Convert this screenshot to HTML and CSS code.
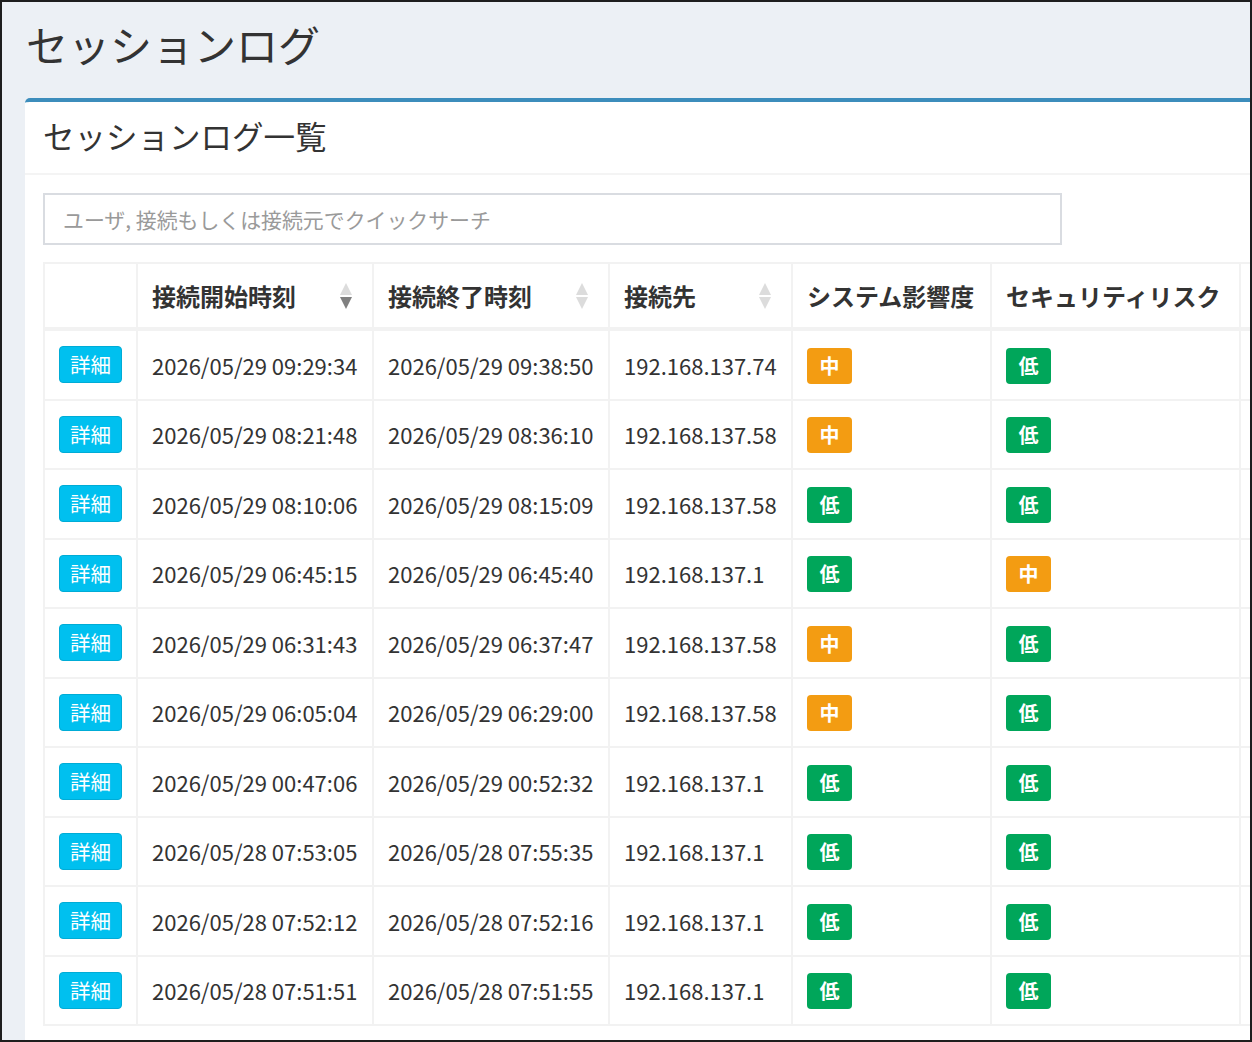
FILE: index.html
```html
<!DOCTYPE html>
<html lang="ja">
<head>
  <meta charset="UTF-8">
  <title>セッションログ</title>
  <link rel="stylesheet" href="styles.css">
</head>
<body>
  <div class="frame">
    <section class="content-header">
      <h1>セッションログ</h1>
    </section>

    <div class="box">
      <div class="box-header">
        <h3 class="box-title">セッションログ一覧</h3>
      </div>
      <div class="box-body">
        <input class="quick-search" type="text" placeholder="ユーザ, 接続もしくは接続元でクイックサーチ">

        <table class="log-table">
          <colgroup>
            <col style="width: 93px">
            <col style="width: 236px">
            <col style="width: 236px">
            <col style="width: 183px">
            <col style="width: 199px">
            <col style="width: 249px">
            <col style="width: 120px">
          </colgroup>
          <thead>
            <tr>
              <th></th>
              <th class="sortable">接続開始時刻
                <svg class="sort-icon desc" viewBox="0 0 14 28"><path class="up" d="M7 1 L13 13 L1 13 Z"/><path class="down" d="M1 15 L13 15 L7 27 Z"/></svg>
              </th>
              <th class="sortable">接続終了時刻
                <svg class="sort-icon" viewBox="0 0 14 28"><path class="up" d="M7 1 L13 13 L1 13 Z"/><path class="down" d="M1 15 L13 15 L7 27 Z"/></svg>
              </th>
              <th class="sortable">接続先
                <svg class="sort-icon" viewBox="0 0 14 28"><path class="up" d="M7 1 L13 13 L1 13 Z"/><path class="down" d="M1 15 L13 15 L7 27 Z"/></svg>
              </th>
              <th>システム影響度</th>
              <th>セキュリティリスク</th>
              <th></th>
            </tr>
          </thead>
          <tbody>
            <tr>
              <td><button class="btn-detail">詳細</button></td>
              <td>2026/05/29 09:29:34</td>
              <td>2026/05/29 09:38:50</td>
              <td>192.168.137.74</td>
              <td><span class="label mid">中</span></td>
              <td><span class="label low">低</span></td>
              <td></td>
            </tr>
            <tr>
              <td><button class="btn-detail">詳細</button></td>
              <td>2026/05/29 08:21:48</td>
              <td>2026/05/29 08:36:10</td>
              <td>192.168.137.58</td>
              <td><span class="label mid">中</span></td>
              <td><span class="label low">低</span></td>
              <td></td>
            </tr>
            <tr>
              <td><button class="btn-detail">詳細</button></td>
              <td>2026/05/29 08:10:06</td>
              <td>2026/05/29 08:15:09</td>
              <td>192.168.137.58</td>
              <td><span class="label low">低</span></td>
              <td><span class="label low">低</span></td>
              <td></td>
            </tr>
            <tr>
              <td><button class="btn-detail">詳細</button></td>
              <td>2026/05/29 06:45:15</td>
              <td>2026/05/29 06:45:40</td>
              <td>192.168.137.1</td>
              <td><span class="label low">低</span></td>
              <td><span class="label mid">中</span></td>
              <td></td>
            </tr>
            <tr>
              <td><button class="btn-detail">詳細</button></td>
              <td>2026/05/29 06:31:43</td>
              <td>2026/05/29 06:37:47</td>
              <td>192.168.137.58</td>
              <td><span class="label mid">中</span></td>
              <td><span class="label low">低</span></td>
              <td></td>
            </tr>
            <tr>
              <td><button class="btn-detail">詳細</button></td>
              <td>2026/05/29 06:05:04</td>
              <td>2026/05/29 06:29:00</td>
              <td>192.168.137.58</td>
              <td><span class="label mid">中</span></td>
              <td><span class="label low">低</span></td>
              <td></td>
            </tr>
            <tr>
              <td><button class="btn-detail">詳細</button></td>
              <td>2026/05/29 00:47:06</td>
              <td>2026/05/29 00:52:32</td>
              <td>192.168.137.1</td>
              <td><span class="label low">低</span></td>
              <td><span class="label low">低</span></td>
              <td></td>
            </tr>
            <tr>
              <td><button class="btn-detail">詳細</button></td>
              <td>2026/05/28 07:53:05</td>
              <td>2026/05/28 07:55:35</td>
              <td>192.168.137.1</td>
              <td><span class="label low">低</span></td>
              <td><span class="label low">低</span></td>
              <td></td>
            </tr>
            <tr>
              <td><button class="btn-detail">詳細</button></td>
              <td>2026/05/28 07:52:12</td>
              <td>2026/05/28 07:52:16</td>
              <td>192.168.137.1</td>
              <td><span class="label low">低</span></td>
              <td><span class="label low">低</span></td>
              <td></td>
            </tr>
            <tr>
              <td><button class="btn-detail">詳細</button></td>
              <td>2026/05/28 07:51:51</td>
              <td>2026/05/28 07:51:55</td>
              <td>192.168.137.1</td>
              <td><span class="label low">低</span></td>
              <td><span class="label low">低</span></td>
              <td></td>
            </tr>
          </tbody>
        </table>
      </div>
    </div>
  </div>
</body>
</html>
```

FILE: styles.css
```css
html, body {
  margin: 0;
  padding: 0;
  overflow: hidden;
}

body {
  font-family: "Noto Sans CJK JP", "Noto Sans", sans-serif;
  color: #333;
}

.frame {
  width: 1252px;
  height: 1042px;
  box-sizing: border-box;
  border: 2px solid #1e1e1e;
  background-color: #ecf0f5;
  overflow: hidden;
}

.content-header {
  padding: 12px 0 0 24px;
  height: 96px;
  box-sizing: border-box;
}

.content-header h1 {
  margin: 0;
  font-size: 42px;
  font-weight: 400;
  line-height: 60px;
  color: #333;
}

.box {
  margin-left: 23px;
  width: 1400px;
  min-height: 1000px;
  background-color: #fff;
  border-top: 4px solid #3c8dbc;
  border-radius: 5px 0 0 0;
}

.box-header {
  height: 73px;
  box-sizing: border-box;
  display: flex;
  align-items: center;
  padding: 0 0 5px 18px;
  border-bottom: 2px solid #f4f4f4;
}

.box-title {
  margin: 0;
  font-size: 31.5px;
  font-weight: 400;
  color: #333;
}

.box-body {
  padding: 18px;
}

.quick-search {
  display: block;
  width: 1019px;
  height: 52px;
  box-sizing: border-box;
  border: 2px solid #d9dce1;
  padding: 0 18px;
  font-family: inherit;
  font-size: 20.9px;
  color: #555;
  outline: none;
}

.quick-search::placeholder {
  color: #9a9a9a;
}

.log-table {
  margin-top: 17px;
  border-collapse: collapse;
  table-layout: fixed;
  width: 1316px;
}

.log-table th,
.log-table td {
  border: 2px solid #f2f2f2;
  text-align: left;
  vertical-align: middle;
  padding: 0 14px;
  white-space: nowrap;
  overflow: hidden;
}

.log-table th {
  height: 63px;
  font-size: 24px;
  font-weight: 700;
  color: #333;
  border-bottom-width: 4px;
}

.log-table th.sortable {
  position: relative;
}

.sort-icon {
  position: absolute;
  right: 19px;
  top: 18px;
  width: 14px;
  height: 28px;
}

.sort-icon path {
  fill: #dcdcdc;
}

.sort-icon.desc .down {
  fill: #808080;
}

.log-table td {
  height: 67.5px;
  font-size: 22px;
  color: #333;
}

.btn-detail {
  display: block;
  width: 63px;
  height: 37px;
  padding: 0;
  border: 1px solid #00acd6;
  border-radius: 4px;
  background-color: #00c0ef;
  color: #fff;
  font-family: inherit;
  font-size: 20.5px;
  line-height: 33px;
  text-align: center;
}

.label {
  display: inline-block;
  width: 45px;
  height: 36px;
  border-radius: 4px;
  color: #fff;
  font-size: 20px;
  font-weight: 700;
  line-height: 36px;
  text-align: center;
  vertical-align: middle;
}

.label.mid {
  background-color: #f39c12;
}

.label.low {
  background-color: #00a65a;
}
```
